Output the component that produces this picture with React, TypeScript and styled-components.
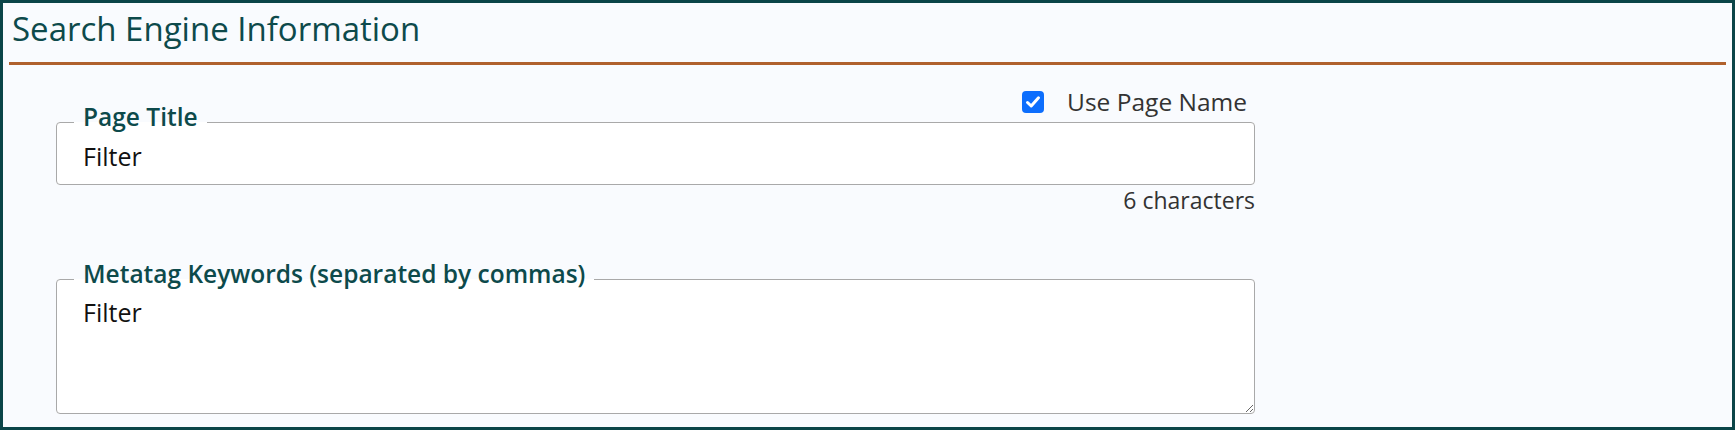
import React, { useState } from "react";
import styled, { createGlobalStyle } from "styled-components";

const GlobalStyle = createGlobalStyle`
  html, body {
    margin: 0;
    padding: 0;
    background: #ffffff;
  }
  body {
    font-family: "Open Sans", "Noto Sans", sans-serif;
  }
  * {
    box-sizing: border-box;
  }
`;

const Panel = styled.section`
  width: 1735px;
  height: 430px;
  border: 3px solid #0b4548;
  background-color: #f9fbfe;
  padding: 6px 6px 0 6px;
`;

const Heading = styled.h2`
  margin: 0;
  padding: 0 0 13px 3px;
  font-size: 33px;
  line-height: 40px;
  font-weight: 500;
  color: #0d4a4b;
  border-bottom: 3px solid #b0612d;
`;

const Body = styled.div`
  width: 1246px;
  padding-left: 47px;
  display: flex;
  flex-direction: column;
`;

const CheckRow = styled.label`
  display: flex;
  justify-content: flex-end;
  align-items: center;
  gap: 23px;
  height: 22px;
  margin-top: 26px;
  padding-right: 8px;
  font-size: 24.5px;
  line-height: 22px;
  color: #333333;
  cursor: pointer;
`;

const Box = styled.span<{ checked: boolean }>`
  width: 22px;
  height: 22px;
  border-radius: 4px;
  display: flex;
  align-items: center;
  justify-content: center;
  background-color: ${(p) => (p.checked ? "#0d6efd" : "#ffffff")};
  border: ${(p) => (p.checked ? "none" : "1px solid #999")};
`;

const Field = styled.fieldset<{ gap: number }>`
  margin: ${(p) => p.gap}px 0 0 0;
  padding: 0;
  border: 1px solid #a9a9a9;
  border-radius: 4px;
  background-color: #ffffff;
  min-width: 0;
`;

const Legend = styled.legend`
  margin-left: 17px;
  padding: 0 9px 10px 9px;
  font-size: 24.5px;
  line-height: 26px;
  font-weight: 600;
  color: #0d4a4b;
`;

const TextInput = styled.input`
  display: block;
  width: 100%;
  height: 32px;
  margin: 0 0 12px 0;
  padding: 0 0 0 26px;
  border: none;
  outline: none;
  background: transparent;
  font-family: "Open Sans", "Noto Sans", sans-serif;
  font-size: 25px;
  line-height: 32px;
  color: #111111;
`;

const TextArea = styled.textarea`
  display: block;
  width: 100%;
  height: 116px;
  margin: 0;
  padding: 1px 0 0 26px;
  border: none;
  outline: none;
  resize: vertical;
  background: transparent;
  font-family: "Open Sans", "Noto Sans", sans-serif;
  font-size: 25px;
  line-height: 29px;
  color: #111111;
`;

const Counter = styled.div`
  margin-top: 3px;
  text-align: right;
  font-size: 23px;
  line-height: 24px;
  color: #333333;
`;

const App = () => {
  const [usePageName, setUsePageName] = useState(true);
  const [title, setTitle] = useState("Filter");
  const [keywords, setKeywords] = useState("Filter");

  return (
    <>
      <GlobalStyle />
      <Panel>
        <Heading>Search Engine Information</Heading>
        <Body>
          <CheckRow onClick={() => setUsePageName(!usePageName)}>
            <Box checked={usePageName}>
              {usePageName && (
                <svg width="16" height="16" viewBox="0 0 16 16">
                  <path
                    d="M2.5 8.5 L6.2 12 L13.5 3.8"
                    fill="none"
                    stroke="#ffffff"
                    strokeWidth="3"
                    strokeLinecap="round"
                    strokeLinejoin="round"
                  />
                </svg>
              )}
            </Box>
            <span>Use Page Name</span>
          </CheckRow>

          <Field gap={-9}>
            <Legend>Page Title</Legend>
            <TextInput value={title} onChange={(e) => setTitle(e.target.value)} />
          </Field>
          <Counter>{title.length} characters</Counter>

          <Field gap={49}>
            <Legend>Metatag Keywords (separated by commas)</Legend>
            <TextArea value={keywords} onChange={(e) => setKeywords(e.target.value)} />
          </Field>
        </Body>
      </Panel>
    </>
  );
};

export default App;
